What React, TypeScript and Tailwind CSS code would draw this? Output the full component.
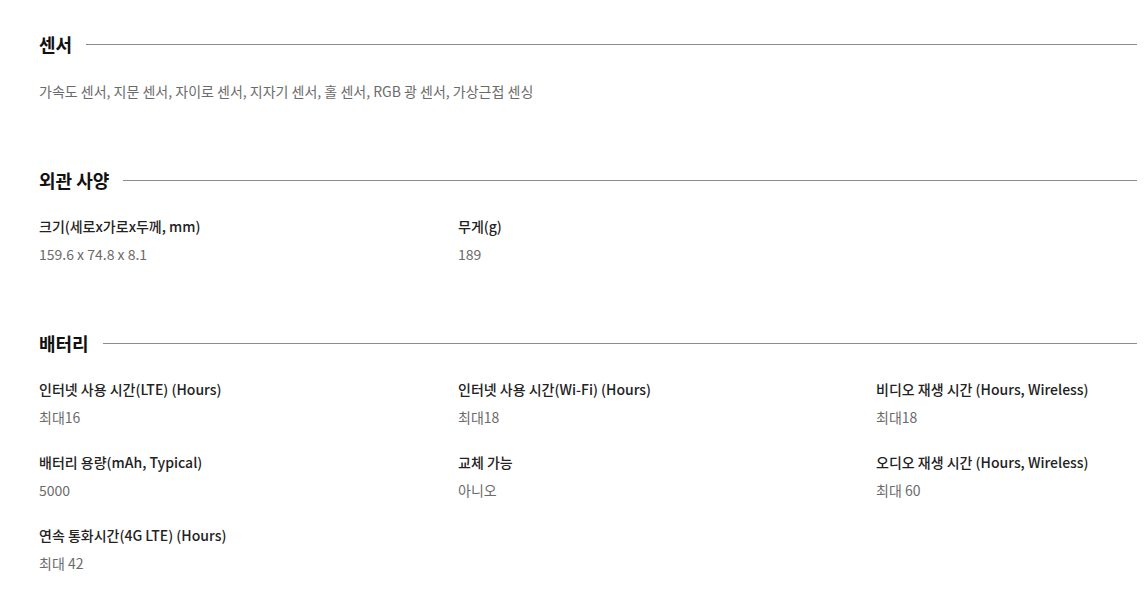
const font = { fontFamily: '"Noto Sans CJK KR", "Noto Sans", sans-serif' }

type Spec = { label: string; value: string }

const sections: { title: string; text?: string; items?: Spec[] }[] = [
  {
    title: '센서',
    text: '가속도 센서, 지문 센서, 자이로 센서, 지자기 센서, 홀 센서, RGB 광 센서, 가상근접 센싱',
  },
  {
    title: '외관 사양',
    items: [
      { label: '크기(세로x가로x두께, mm)', value: '159.6 x 74.8 x 8.1' },
      { label: '무게(g)', value: '189' },
    ],
  },
  {
    title: '배터리',
    items: [
      { label: '인터넷 사용 시간(LTE) (Hours)', value: '최대16' },
      { label: '인터넷 사용 시간(Wi-Fi) (Hours)', value: '최대18' },
      { label: '비디오 재생 시간 (Hours, Wireless)', value: '최대18' },
      { label: '배터리 용량(mAh, Typical)', value: '5000' },
      { label: '교체 가능', value: '아니오' },
      { label: '오디오 재생 시간 (Hours, Wireless)', value: '최대 60' },
      { label: '연속 통화시간(4G LTE) (Hours)', value: '최대 42' },
    ],
  },
]

export default function App() {
  return (
    <div className="min-h-[596px] bg-white pl-[39px] pr-[11px] pt-8 pb-8" style={font}>
      {sections.map((s, i) => (
        <section key={s.title} className={i > 0 ? 'mt-[67px]' : ''}>
          <div className="flex h-6 items-center">
            <h2 className="text-[18px] font-bold leading-6 text-[#111]">{s.title}</h2>
            <div className="ml-[14px] h-px flex-1 bg-[#8c8c8c]" />
          </div>
          {s.text && (
            <p className="mt-[25px] text-[14px] leading-5 text-[#6b6b6b]">{s.text}</p>
          )}
          {s.items && (
            <div className="mt-6 grid grid-cols-[419px_418px_1fr] gap-y-[25px]">
              {s.items.map((it) => (
                <div key={it.label}>
                  <div className="text-[14px] font-medium leading-5 text-[#222]">{it.label}</div>
                  <div className="mt-2 text-[14px] leading-5 text-[#6b6b6b]">{it.value}</div>
                </div>
              ))}
            </div>
          )}
        </section>
      ))}
    </div>
  )
}
